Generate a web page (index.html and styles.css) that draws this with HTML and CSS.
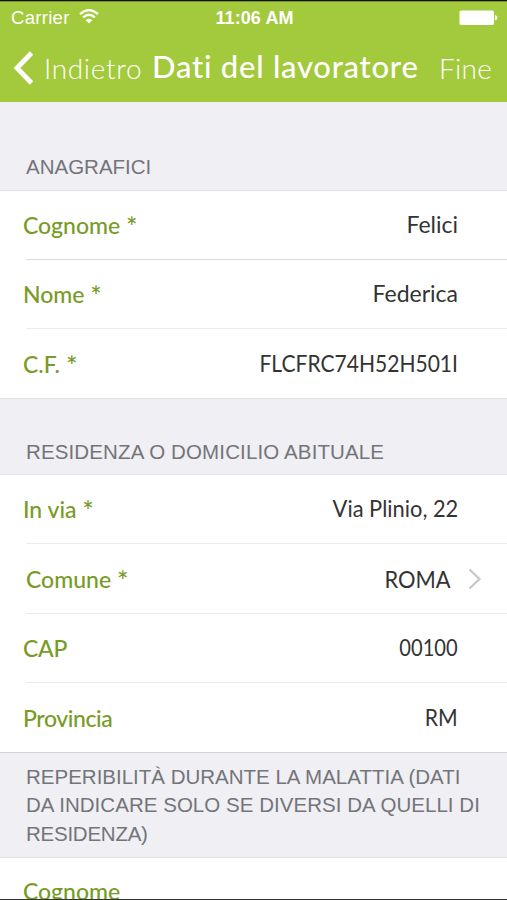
FILE: index.html
```html
<!DOCTYPE html>
<html lang="it">
<head>
<meta charset="utf-8">
<title>Dati del lavoratore</title>
<link rel="stylesheet" href="styles.css">
</head>
<body>
<div class="screen">
  <header class="header">
    <div class="status">
      <div class="carrier"><span>Carrier</span>
        <svg class="wifi" width="20" height="15" viewBox="0 0 20 15"><path d="M1 5.2Q10-3 19 5.2M4.2 8.4Q10 3 15.8 8.4" fill="none" stroke="#fff" stroke-width="2.4"/><path d="M6.7 11.2Q10 8.4 13.3 11.2L10 14.6Z" fill="#fff"/></svg>
      </div>
      <span class="time">11:06 AM</span>
      <svg class="battery" width="39" height="16" viewBox="0 0 39 16"><rect x="0.5" y="0.5" width="34.5" height="14.5" rx="1.6" fill="#fff"/><path d="M36 5Q38.5 5.6 38.5 7.8T36 10.6Z" fill="#fff"/></svg>
    </div>
    <nav class="nav">
      <svg class="back" width="21" height="34" viewBox="0 0 21 34"><path d="M19.5 2L5 17L19.5 32" fill="none" stroke="#fff" stroke-width="4.8"/></svg>
      <span class="back-label">Indietro</span>
      <h1 class="title">Dati del lavoratore</h1>
      <span class="done">Fine</span>
    </nav>
  </header>
  <h2 class="section first"><span>ANAGRAFICI</span></h2>
  <div class="row strong"><span class="label">Cognome <i>*</i></span><span class="value">Felici</span></div>
  <div class="row"><span class="label">Nome <i>*</i></span><span class="value">Federica</span></div>
  <div class="row last low"><span class="label">C.F. <i>*</i></span><span class="value code">FLCFRC74H52H501I</span></div>
  <h2 class="section second"><span class="wide">RESIDENZA O DOMICILIO ABITUALE</span></h2>
  <div class="row"><span class="label">In via <i>*</i></span><span class="value street">Via Plinio, 22</span></div>
  <div class="row link low"><span class="label">Comune <i>*</i></span><span class="value roma">ROMA</span>
    <svg class="chevron" width="14" height="22" viewBox="0 0 14 22"><path d="M1.5 1.5L11.5 11L1.5 20.5" fill="none" stroke="#c7c7cc" stroke-width="2.3"/></svg></div>
  <div class="row"><span class="label cap">CAP</span><span class="value zip">00100</span></div>
  <div class="row last low"><span class="label prov">Provincia</span><span class="value rm">RM</span></div>
  <h2 class="section third"><span>REPERIBILITÀ DURANTE LA MALATTIA (DATI</span><span class="l2">DA INDICARE SOLO SE DIVERSI DA QUELLI DI</span><span class="l3">RESIDENZA)</span></h2>
  <div class="row cut"><span class="label">Cognome</span></div>
</div>
</body>
</html>
```
FILE: styles.css
```css
* { box-sizing: border-box; }
body { margin: 0; background: #fff; }
.screen {
  width: 507px; height: 900px; overflow: hidden;
  display: flex; flex-direction: column;
  border-top: 1px solid #0c1000; border-bottom: 1px solid #333;
  font-family: Lato, "Open Sans", sans-serif;
}
.screen > * { flex: none; }
.header { height: 101px; background: #a3c93c; color: #fff; border-top: 1px solid #78942c; }
.status {
  display: grid; grid-template-columns: 1fr auto 1fr; align-items: center;
  height: 32px; padding: 0 9px 0 11px;
  font: 18.5px/32px "Liberation Sans", sans-serif;
}
.carrier { display: flex; align-items: center; gap: 9px; letter-spacing: .3px; }
.wifi { margin-top: -3px; }
.time { font-weight: 700; font-size: 18px; letter-spacing: .1px; }
.battery { justify-self: end; margin-top: -1px; }
.nav { display: flex; align-items: center; height: 66px; padding-left: 12px; }
.back { margin: 2px 11px 0 0; }
.back-label, .done { font-weight: 300; font-size: 28px; margin-top: 1px; }
.back-label { width: 108px; white-space: nowrap; letter-spacing: .65px; }
.done { letter-spacing: .3px; margin-left: -1px; }
.title { margin: -2px 0 0; width: 288px; font-size: 31px; font-weight: 500; white-space: nowrap; letter-spacing: .75px; }
.section {
  margin: 0; padding-left: 26px; background: #efeff4; border-bottom: 1px solid #e2e2e5;
  color: #747479; font: 20.5px/28.5px "Liberation Sans", sans-serif;
  display: flex; flex-direction: column; justify-content: flex-end; white-space: nowrap;
}
.first { height: 89px; padding-bottom: 9px; }
.second { height: 77px; padding-bottom: 8px; border-top: 1px solid #e2e2e5; }
.third { height: 106px; padding-bottom: 9px; border-top: 1px solid #d3d3d7; }
.wide { letter-spacing: .13px; }
.l2 { letter-spacing: .04px; }
.l3 { letter-spacing: -.25px; }
.row {
  position: relative; height: 69px; padding: 0 49px 0 23px;
  display: flex; align-items: center; justify-content: space-between;
  font-size: 23px; line-height: 68px; white-space: nowrap;
}
.row:not(.last):not(.cut)::after {
  content: ""; position: absolute; left: 26px; right: 0; bottom: 0; height: 1px; background: #ececee;
}
.row.strong::after { background: #dcdcdf !important; }
.label { color: #789b26; font-weight: 500; margin-top: -2px; }
.low .label { margin-top: 0; }
.label i { display: inline-block; font-style: normal; font-size: 27px; line-height: 20px; transform: translateY(3px); }
.cap { letter-spacing: -.3px; }
.prov { letter-spacing: -.4px; }
.value { color: #333; margin-top: -3px; transform-origin: right center; }
.low .value { margin-top: -1px; }
.code { transform: scaleX(.915); }
.street { transform: scaleX(.95); }
.zip { transform: scaleX(.875); }
.rm { transform: scaleX(.92); }
.link { height: 70px; padding: 0 25px 0 26px; }
.link .value { margin: -1px 17px 0 auto; transform: scaleX(.95); }
.cut { height: 69px; }
.cut .label { margin-top: -4px; }
```
